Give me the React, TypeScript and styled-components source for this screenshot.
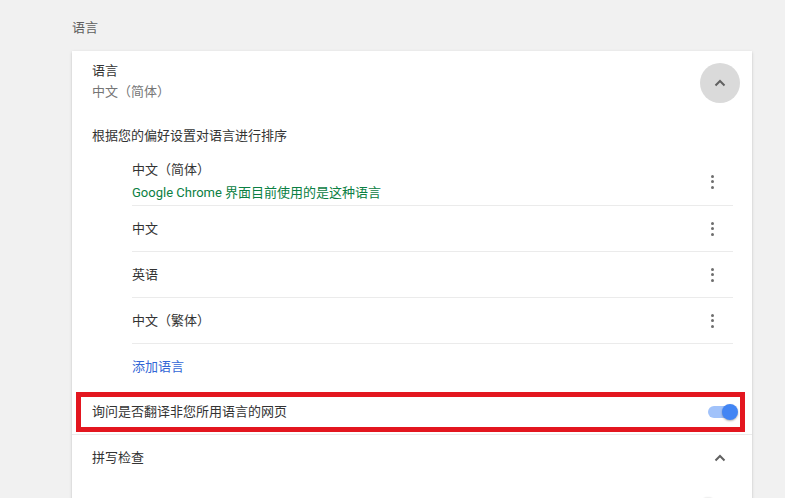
import React from 'react';
import styled, { createGlobalStyle } from 'styled-components';

const GlobalStyle = createGlobalStyle`
  body {
    margin: 0;
    background: #f1f1f1;
    font-family: Roboto, "Noto Sans CJK SC", sans-serif;
    font-size: 13px;
    line-height: 20px;
    color: #333;
  }
`;

const languages = [
  { name: '中文（简体）', note: 'Google Chrome 界面目前使用的是这种语言' },
  { name: '中文' },
  { name: '英语' },
  { name: '中文（繁体）' },
];

const ChevronUp = (): React.JSX.Element => (
  <svg width="12" height="8" viewBox="0 0 12 8">
    <path d="M1.5 6.5 L6 2 L10.5 6.5" fill="none" stroke="#616161" strokeWidth="2" />
  </svg>
);

const Kebab = (): React.JSX.Element => (
  <KebabButton>
    <Dot />
    <Dot />
    <Dot />
  </KebabButton>
);

const App = (): React.JSX.Element => (
  <>
    <GlobalStyle />
    <Page>
      <SectionTitle>语言</SectionTitle>
      <Card>
        <Header>
          <HeaderText>
            <Title>语言</Title>
            <Secondary>中文（简体）</Secondary>
          </HeaderText>
          <RoundButton $filled>
            <ChevronUp />
          </RoundButton>
        </Header>
        <Description>根据您的偏好设置对语言进行排序</Description>
        <LangList>
          {languages.map((lang, i) => (
            <LangItem key={lang.name} $first={i === 0}>
              <LangText>
                <div>{lang.name}</div>
                {lang.note && <Note>{lang.note}</Note>}
              </LangText>
              <Kebab />
            </LangItem>
          ))}
          <AddRow>
            <AddLink>添加语言</AddLink>
          </AddRow>
        </LangList>
        <HighlightRow>
          <Highlight>
            <span>询问是否翻译非您所用语言的网页</span>
            <Toggle $on>
              <Knob $on />
            </Toggle>
          </Highlight>
        </HighlightRow>
        <Row>
          <span>拼写检查</span>
          <RoundButton>
            <ChevronUp />
          </RoundButton>
        </Row>
        <SubRow>
          <span>中文（简体）</span>
          <Toggle>
            <Knob />
          </Toggle>
        </SubRow>
      </Card>
    </Page>
  </>
);

export default App;

const Page = styled.div`
  padding: 0 33px 0 72px;
  height: 498px;
  overflow: hidden;
`;

const SectionTitle = styled.div`
  padding-top: 18px;
  margin-bottom: 13px;
  color: #5f5f5f;
`;

const Card = styled.div`
  width: 680px;
  background: #fff;
  box-shadow: 0 1px 2px rgba(0, 0, 0, 0.12), 0 1px 4px rgba(0, 0, 0, 0.08);
`;

const Header = styled.div`
  height: 64px;
  display: flex;
  align-items: center;
  justify-content: space-between;
  padding: 0 12px 0 20px;
`;

const HeaderText = styled.div`
  display: flex;
  flex-direction: column;
  gap: 1px;
  margin-top: -3px;
`;

const Title = styled.div`
  color: #333;
`;

const Secondary = styled.div`
  color: #757575;
`;

const RoundButton = styled.div<{ $filled?: boolean }>`
  width: 40px;
  height: 40px;
  border-radius: 50%;
  background: ${(p) => (p.$filled ? '#dadada' : 'transparent')};
  display: flex;
  align-items: center;
  justify-content: center;
`;

const Description = styled.div`
  padding: 11px 20px 0;
`;

const LangList = styled.div`
  margin: 0 19px 0 60px;
`;

const LangItem = styled.div<{ $first?: boolean }>`
  display: flex;
  align-items: center;
  justify-content: space-between;
  min-height: 46px;
  box-sizing: border-box;
  padding: ${(p) => (p.$first ? '14px 0 2px' : '0')};
  border-bottom: 1px solid #ebebeb;
`;

const LangText = styled.div`
  display: flex;
  flex-direction: column;
  gap: 3px;
`;

const Note = styled.div`
  color: #0b8043;
`;

const KebabButton = styled.div`
  width: 42px;
  display: flex;
  flex-direction: column;
  align-items: center;
  gap: 2.5px;
`;

const Dot = styled.span`
  width: 3px;
  height: 3px;
  border-radius: 50%;
  background: #6e6e6e;
`;

const AddRow = styled.div`
  height: 46px;
  display: flex;
  align-items: center;
`;

const AddLink = styled.span`
  color: #3367d6;
`;

const HighlightRow = styled.div`
  padding: 2px 7px 2px 4px;
  border-bottom: 1px solid #ebebeb;
`;

const Highlight = styled.div`
  height: 30px;
  border: 5px solid #e3161f;
  display: flex;
  align-items: center;
  justify-content: space-between;
  padding: 0 4px 0 11px;
`;

const Toggle = styled.div<{ $on?: boolean }>`
  position: relative;
  width: 26px;
  height: 12px;
  border-radius: 6px;
  margin-right: 2px;
  background: ${(p) => (p.$on ? '#a1c2fa' : '#bdbdbd')};
`;

const Knob = styled.span<{ $on?: boolean }>`
  position: absolute;
  top: -2px;
  ${(p) => (p.$on ? 'right: -4px;' : 'left: -4px;')}
  width: 16px;
  height: 16px;
  border-radius: 50%;
  background: ${(p) => (p.$on ? '#4285f4' : '#f1f1f1')};
  box-shadow: 0 1px 2px rgba(0, 0, 0, 0.3);
`;

const Row = styled.div`
  height: 46px;
  display: flex;
  align-items: center;
  justify-content: space-between;
  padding: 0 12px 0 20px;
`;

const SubRow = styled.div`
  height: 48px;
  display: flex;
  align-items: center;
  justify-content: space-between;
  padding: 0 20px 0 60px;
`;
